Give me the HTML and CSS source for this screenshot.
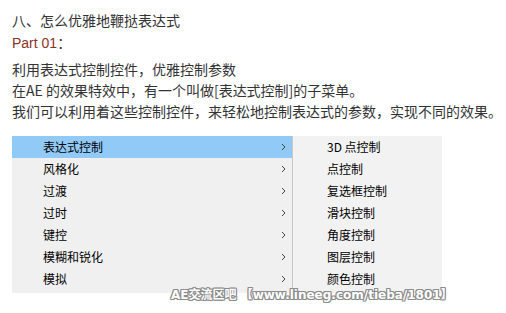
FILE: index.html
```html
<!DOCTYPE html>
<html lang="zh-CN">
<head>
    <meta charset="UTF-8">
    <meta name="viewport" content="width=device-width, initial-scale=1.0">
    <title>怎么优雅地鞭挞表达式</title>
    <link rel="stylesheet" href="styles.css">
</head>
<body>
    <article class="post">
        <p class="line">八、怎么优雅地鞭挞表达式</p>
        <p class="line part">Part 01<span class="colon">：</span></p>
        <div class="body-text">
            <p class="line">利用表达式控制控件，优雅控制参数</p>
            <p class="line">在AE 的效果特效中，有一个叫做[表达式控制]的子菜单。</p>
            <p class="line">我们可以利用着这些控制控件，来轻松地控制表达式的参数，实现不同的效果。</p>
        </div>

        <div class="menu">
            <ul class="menu-main">
                <li class="item active">表达式控制<svg class="arrow" viewBox="0 0 5 8"><polyline points="1,1 4,4 1,7"/></svg></li>
                <li class="item">风格化<svg class="arrow" viewBox="0 0 5 8"><polyline points="1,1 4,4 1,7"/></svg></li>
                <li class="item">过渡<svg class="arrow" viewBox="0 0 5 8"><polyline points="1,1 4,4 1,7"/></svg></li>
                <li class="item">过时<svg class="arrow" viewBox="0 0 5 8"><polyline points="1,1 4,4 1,7"/></svg></li>
                <li class="item">键控<svg class="arrow" viewBox="0 0 5 8"><polyline points="1,1 4,4 1,7"/></svg></li>
                <li class="item">模糊和锐化<svg class="arrow" viewBox="0 0 5 8"><polyline points="1,1 4,4 1,7"/></svg></li>
                <li class="item">模拟<svg class="arrow" viewBox="0 0 5 8"><polyline points="1,1 4,4 1,7"/></svg></li>
            </ul>
            <ul class="menu-sub">
                <li class="item">3D 点控制</li>
                <li class="item">点控制</li>
                <li class="item">复选框控制</li>
                <li class="item">滑块控制</li>
                <li class="item">角度控制</li>
                <li class="item">图层控制</li>
                <li class="item">颜色控制</li>
            </ul>
        </div>

        <div class="watermark">AE交流区吧 【www.lineeg.com/tieba/1801】</div>
    </article>
</body>
</html>
```

FILE: styles.css
```css
:root {
    --text-color: #333;
    --part-color: #8a3324;
    --menu-bg: #f0f0f0;
    --menu-sub-bg: #f2f2f2;
    --menu-hover: #91c9f7;
    --menu-line: #c8c8c8;
}
body {
    margin: 0;
    background: #fff;
    font-family: "Noto Sans CJK SC", "Noto Sans", sans-serif;
    color: var(--text-color);
}
.post {
    position: relative;
    padding: 9px 0 0 12px;
    height: 304px;
}
.line {
    margin: 0;
    font-size: 14px;
    line-height: 22px;
    white-space: nowrap;
}
.part {
    color: var(--part-color);
    font-family: "Liberation Sans", "Noto Sans CJK SC", sans-serif;
}
.part .colon {
    font-family: "Noto Sans CJK SC", sans-serif;
    color: var(--text-color);
}
.body-text {
    margin-top: 5px;
}
.body-text .line {
    line-height: 21px;
}
.menu {
    display: flex;
    margin-top: 14px;
    width: 430px;
    font-size: 12px;
    color: #000;
}
.menu ul {
    list-style: none;
    margin: 0;
    padding: 0 0 3px 0;
}
.menu-main {
    width: 280px;
    background: var(--menu-bg);
    border-right: 1px solid var(--menu-line);
}
.menu-sub {
    flex: 1;
    background: var(--menu-sub-bg);
}
.item {
    display: flex;
    align-items: center;
    height: 22px;
    line-height: 22px;
}
.menu-main .item {
    padding-left: 31px;
}
.menu-main .item.active {
    background: var(--menu-hover);
}
.menu-sub .item {
    padding-left: 34px;
}
.arrow {
    width: 5px;
    height: 8px;
    margin-left: auto;
    margin-right: 6px;
    fill: none;
    stroke: #444;
    stroke-width: 1;
}
.watermark {
    position: absolute;
    left: 171px;
    top: 287px;
    font-family: "DejaVu Sans", "Noto Sans CJK SC", sans-serif;
    font-weight: bold;
    font-size: 12px;
    line-height: 16px;
    color: #fff;
    white-space: nowrap;
    text-shadow: 1px 0 0 #8c8c8c, -1px 0 0 #8c8c8c, 0 1px 0 #8c8c8c, 0 -1px 0 #8c8c8c,
        1px 1px 0 #8c8c8c, -1px -1px 0 #8c8c8c, 1px -1px 0 #8c8c8c, -1px 1px 0 #8c8c8c;
}
```
